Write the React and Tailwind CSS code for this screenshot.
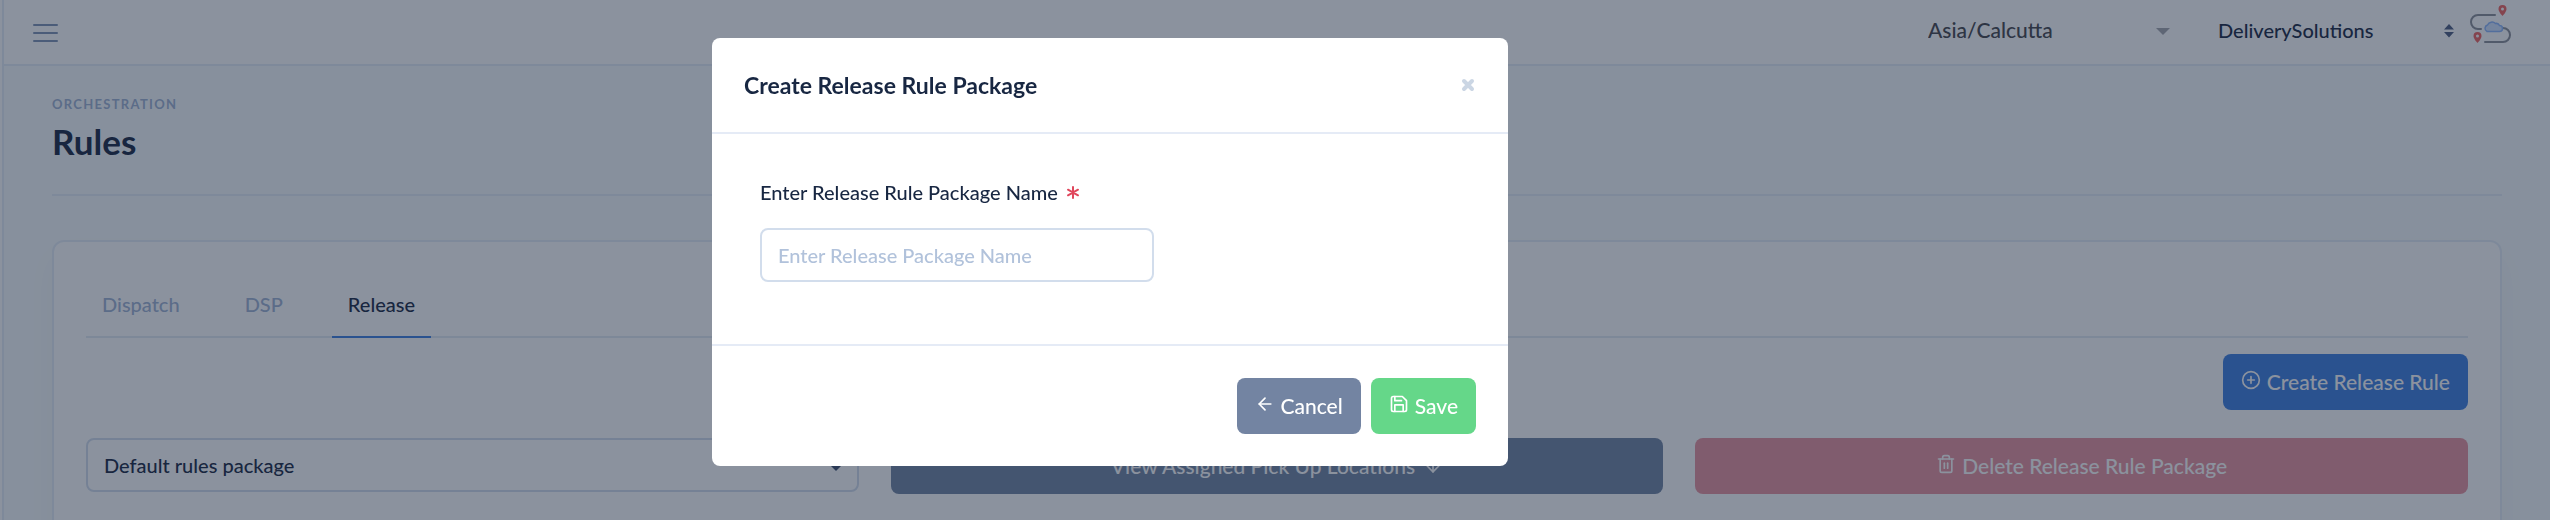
import { useState } from "react";
import { FiArrowDown, FiArrowLeft, FiPlusCircle, FiSave, FiTrash2 } from "react-icons/fi";

const ABAS = ["Dispatch", "DSP", "Release"];

function Logo() {
  return (
    <svg className="mb-4" width="42" height="42" viewBox="0 0 42 42" fill="none" aria-hidden="true">
      <g stroke="#8a8e97" strokeWidth="2" strokeLinecap="round">
        <path d="M25 12H8a7 7 0 0 0 0 14h3" />
        <path d="M32 25h1a7 7 0 0 1 0 14H15" />
      </g>
      <path d="M17 28.500a3.500 3.500 0 0 1 .5-6.500a5 5 0 0 1 8-1.500a3.500 3.500 0 0 1 4 2a3 3 0 0 1 0 6z"
        fill="#d0e2ff" stroke="#8db6fa" strokeWidth="1.500" />
      <g fill="#f0625f" fillRule="evenodd">
        <path d="M32.500 2a4 4 0 0 1 4 4c0 3-4 7-4 7s-4-4-4-7a4 4 0 0 1 4-4zm0 2.600a1.500 1.500 0 1 0 0 3a1.500 1.500 0 0 0 0-3z" />
        <path d="M7.500 29a4 4 0 0 1 4 4c0 3-4 7-4 7s-4-4-4-7a4 4 0 0 1 4-4zm0 2.600a1.500 1.500 0 1 0 0 3a1.500 1.500 0 0 0 0-3z" />
      </g>
    </svg>
  );
}

function Topo() {
  return (
    <header className="flex h-[66px] items-center border-b-2 border-[#e5edf7] bg-white pr-[38px] pl-7">
      <button aria-label="Menu" className="text-[#7f93b5]">
        <svg width="28" height="28" viewBox="0 0 28 28" stroke="currentColor" strokeWidth="2" strokeLinecap="round">
          <path d="M2 7h23M2 15h23M2 23h23" />
        </svg>
      </button>
      <div className="ml-auto flex items-center">
        <div className="relative mr-12 w-[242px]">
          <select aria-label="Timezone" className="block h-8 w-full appearance-none pb-1 text-[21px] leading-7 text-[#44444a]">
            <option>Asia/Calcutta</option>
          </select>
          <svg className="absolute top-3 right-0" width="14" height="7" viewBox="0 0 14 7" fill="#a5a7ad" aria-hidden="true">
            <path d="M0 0h14L7 7z" />
          </svg>
        </div>
        <div className="relative mr-4 w-[236px]">
          <select aria-label="Tenant" className="block h-8 w-full appearance-none pb-1 text-[20px] leading-7 text-[#182742]">
            <option>DeliverySolutions</option>
          </select>
          <svg className="absolute top-2 right-0" width="10" height="14" viewBox="0 0 10 14" fill="#4d5d80" aria-hidden="true">
            <path d="M0 5.500L5 0l5 5.500zM0 8h10l-5 5.500z" />
          </svg>
        </div>
        <Logo />
      </div>
    </header>
  );
}

function Pagina() {
  const [aba, setAba] = useState("Release");

  return (
    <div className="flex min-h-screen bg-[#f7fbfc]">
      <div className="w-1 border-r-2 border-[#e5edf7] bg-white" />
      <div className="min-w-0 flex-1">
        <Topo />
        <main className="px-12">

          {/* Título */}
          <div className="border-b-2 border-[#e5edf7] pt-7 pb-8">
            <p className="text-[13px] leading-5 font-bold tracking-widest text-[#9fb2d3]">ORCHESTRATION</p>
            <h1 className="mt-1 text-[35px] leading-[46px] font-bold text-[#182742] -mb-[2px]">Rules</h1>
          </div>

          <section className="mt-11 rounded-xl border-2 border-[#e5edf7] bg-white px-8 pb-12 shadow-[0_16px_32px_rgba(18,38,63,0.03)]">

            {/* Abas */}
            <nav className="flex gap-[33px] border-b-2 border-[#e3ebf3] pt-[30px]">
              {ABAS.map((nome) => (
                <button key={nome} onClick={() => setAba(nome)}
                  className={nome === aba
                    ? "-mb-[2px] border-b-2 border-[#3d7fe0] px-4 py-4 text-[20px] leading-8 text-[#182742]"
                    : "-mb-[2px] border-b-2 border-transparent px-4 py-4 text-[20px] leading-8 text-[#9fb2d3]"}>
                  {nome}
                </button>
              ))}
            </nav>

            <div className="mt-4 flex justify-end">
              <button className="flex h-14 items-center gap-1.5 rounded-lg bg-[#3d7fe0] px-[18px] text-[21px] text-white">
                <FiPlusCircle className="mb-1" size={20} strokeWidth={2} /> Create Release Rule
              </button>
            </div>

            <div className="mt-7 grid grid-cols-3 gap-8">
              <div className="relative">
                <select aria-label="Rules package"
                  className="h-[54px] w-full appearance-none rounded-lg border-2 border-[#d2ddec] px-4 text-[20px] text-[#182742]">
                  <option>Default rules package</option>
                </select>
                <svg className="absolute top-6 right-4" width="14" height="9" viewBox="0 0 14 9" fill="#3d4f6e" aria-hidden="true">
                  <path d="M0 2l2-2h10l2 2-7 7z" />
                </svg>
              </div>
              <button className="flex h-14 items-center justify-center gap-2 rounded-lg bg-[#7184a2] text-[21px] text-white">
                View Assigned Pick Up Locations <FiArrowDown size={20} strokeWidth={2} />
              </button>
              <button className="flex h-14 items-center justify-center gap-1.5 rounded-lg bg-[#e9939e] text-[21px] text-white">
                <FiTrash2 className="mb-1" size={20} strokeWidth={2} /> Delete Release Rule Package
              </button>
            </div>
          </section>
        </main>
      </div>
    </div>
  );
}

function ModalPacote() {
  const [nome, setNome] = useState("");

  return (
    <div className="fixed inset-0 flex items-start justify-center bg-[#17253e]/50 pt-[38px] pr-[330px]">
      <div role="dialog" aria-labelledby="titulo-modal" className="w-full max-w-[796px] rounded-lg bg-white text-[#182742]">

        {/* Cabeçalho */}
        <div className="flex items-center justify-between border-b-2 border-[#e5ebf6] px-8 py-8">
          <h2 id="titulo-modal" className="text-[23px] leading-[30px] font-bold">Create Release Rule Package</h2>
          <button aria-label="Close" className="text-[#cbd6e4]">
            <svg width="16" height="16" viewBox="0 0 16 16" stroke="currentColor" strokeWidth="4" strokeLinecap="round">
              <path d="M4 4l8 8M12 4l-8 8" />
            </svg>
          </button>
        </div>

        {/* Corpo */}
        <div className="px-12 pt-11 pb-[62px]">
          <label htmlFor="nome-pacote" className="flex items-center gap-2 pb-1 text-[20px] leading-7">
            Enter Release Rule Package Name
            <svg width="14" height="14" viewBox="0 0 14 14" stroke="#e0475c" strokeWidth="2" strokeLinecap="round" aria-label="required">
              <path d="M7 2v11M2 4.700l10 5.600M12 4.700L2 10.300" />
            </svg>
          </label>
          <input id="nome-pacote" type="text" value={nome} onChange={(e) => setNome(e.target.value)}
            placeholder="Enter Release Package Name"
            className="mt-[18px] block h-[54px] w-[394px] rounded-lg border-2 border-[#d2ddec] px-4 text-[20px] outline-none placeholder:text-[#b1c2db]" />
        </div>

        {/* Rodapé */}
        <div className="flex justify-end gap-[10px] border-t-2 border-[#e5ebf6] p-8 text-[21px] text-white">
          <button className="flex h-14 items-center gap-1.5 rounded-lg bg-[#7384a2] px-[18px]">
            <FiArrowLeft className="mb-1" size={20} strokeWidth={2} /> Cancel
          </button>
          <button className="flex h-14 items-center gap-1.5 rounded-lg bg-[#65d789] px-[18px]">
            <FiSave className="mb-1" size={20} strokeWidth={2} /> Save
          </button>
        </div>
      </div>
    </div>
  );
}

export default function App() {
  return (
    <div className="h-screen overflow-hidden font-['Lato',sans-serif] font-medium">
      <Pagina />
      <ModalPacote />
    </div>
  );
}
